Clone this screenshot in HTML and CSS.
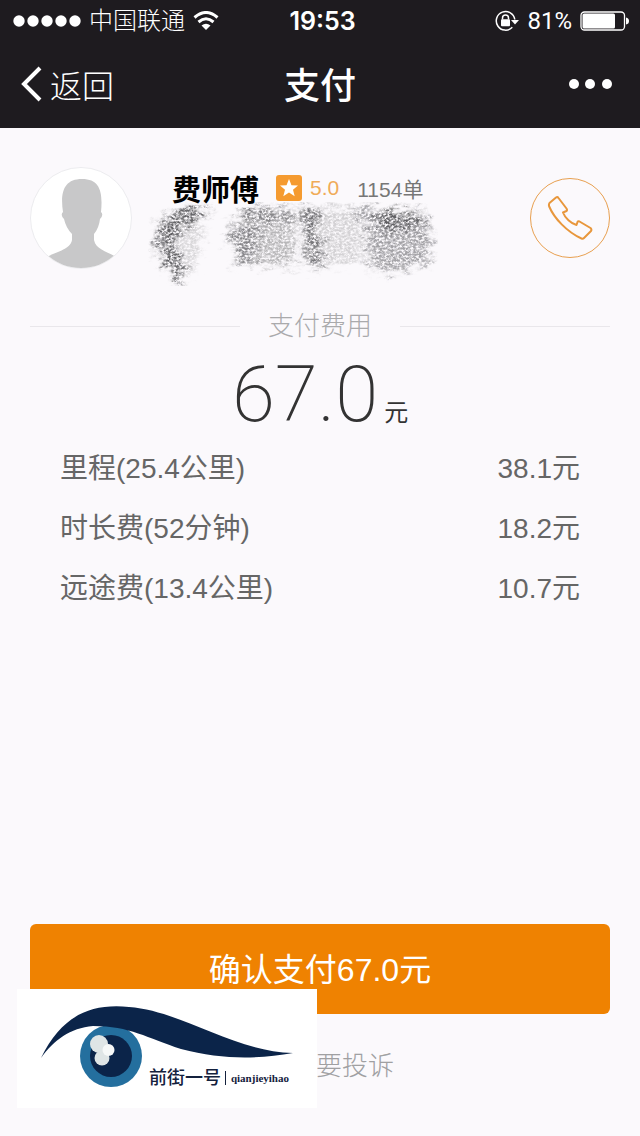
FILE: index.html
```html
<!DOCTYPE html>
<html lang="zh-CN">
<head>
    <meta charset="UTF-8">
    <meta name="viewport" content="width=device-width, initial-scale=1.0">
    <title>支付</title>
    <link rel="stylesheet" href="styles.css">
</head>
<body>

    <header class="top">
        <div class="status">
            <div class="status-left">
                <svg class="signal" width="68" height="12" viewBox="0 0 68 12" fill="#fff">
                    <circle cx="6" cy="6" r="5.7"/>
                    <circle cx="20" cy="6" r="5.7"/>
                    <circle cx="34" cy="6" r="5.7"/>
                    <circle cx="48" cy="6" r="5.7"/>
                    <circle cx="62" cy="6" r="5.7"/>
                </svg>
                <span>中国联通</span>
                <svg width="26" height="20" viewBox="0 0 26 20" fill="none" stroke="#fff" stroke-width="3">
                    <path d="M1.5 6.5Q13-3.5 24.500 6.500"/>
                    <path d="M5.500 11Q13 4.500 20.500 11"/>
                    <path d="M13 19L8.500 14.500Q13 10.800 17.500 14.500Z" fill="#fff" stroke="none"/>
                </svg>
            </div>
            <span class="time">19:53</span>
            <div class="status-right">
                <svg width="24" height="22" viewBox="0 0 24 22" fill="none" stroke="#fff" stroke-width="1.500">
                    <path d="M17.300 17.300A9.300 9.300 0 1 1 19.800 9.500"/>
                    <path d="M16 10H24L20 14.500Z" fill="#fff" stroke="none"/>
                    <path d="M7.500 9.500V8a3 3 0 0 1 6 0v1.500"/>
                    <rect x="6" y="9.300" width="9" height="7" rx="1" fill="#fff" stroke="none"/>
                </svg>
                <span class="percent">81%</span>
                <svg width="50" height="20" viewBox="0 0 50 20">
                    <rect x="1" y="1" width="43.500" height="18" rx="3.500" fill="none" stroke="#fff" stroke-width="1.300"/>
                    <rect x="2.500" y="2.500" width="32.500" height="15" rx="1.500" fill="#fff"/>
                    <path d="M46 6.500Q49 7 49 10T46 13.500Z" fill="#fff"/>
                </svg>
            </div>
        </div>
        <nav class="nav">
            <button type="button" class="back">
                <svg width="22" height="36" viewBox="0 0 22 36" fill="none" stroke="#fff" stroke-width="4">
                    <path d="M20 2L4 18L20 34"/>
                </svg>
                返回
            </button>
            <h1 class="title">支付</h1>
            <button type="button" class="more" aria-label="更多">
                <svg width="44" height="12" viewBox="0 0 44 12" fill="#fff">
                    <circle cx="6" cy="6" r="5"/>
                    <circle cx="22" cy="6" r="5"/>
                    <circle cx="39" cy="6" r="5"/>
                </svg>
            </button>
        </nav>
    </header>

    <main class="content">
        <section class="driver">
            <svg class="avatar" width="102" height="102" viewBox="0 0 102 102">
                <defs>
                    <clipPath id="face"><circle cx="51" cy="51" r="50"/></clipPath>
                </defs>
                <circle cx="51" cy="51" r="50.500" fill="#fff" stroke="#ececef"/>
                <path clip-path="url(#face)" fill="#c8c8c9" d="M33 45C30 25 34 12 52 12C70 12 73 25 71 45Q74 48 70 52Q69 61 64 67V73C66 83 77 84 86 90V102H17V90C27 84 40 83 42 73V67Q36 61 34 52Q30 48 33 45Z"/>
            </svg>

            <div class="info">
                <div class="info-line">
                    <h2 class="name">费师傅</h2>
                    <svg class="star" width="26" height="26" viewBox="0 0 26 26">
                        <rect width="26" height="26" rx="3" fill="#f59b30"/>
                        <path fill="#fff" d="M13 4L15.500 10.200L22 10.500L17 14.700L18.700 21.200L13 17.600L7.300 21.200L9 14.700L4 10.500L10.500 10.200Z"/>
                    </svg>
                    <span class="score">5.0</span>
                    <span class="orders">1154单</span>
                </div>
                <!-- plate number and car, scribbled over -->
                <svg class="scribble" width="290" height="84" viewBox="0 0 290 84">
                    <defs>
                        <filter id="pencil" x="-5%" y="-10%" width="110%" height="120%">
                            <feTurbulence type="fractalNoise" baseFrequency="0.35 0.5" numOctaves="4" seed="8" result="grain"/>
                            <feColorMatrix in="grain" type="matrix" values="0 0 0 0 0  0 0 0 0 0  0 0 0 0 0  3 0 0 0 -0.9" result="dots"/>
                            <feTurbulence type="fractalNoise" baseFrequency="0.08 0.16" numOctaves="3" seed="3" result="warp"/>
                            <feGaussianBlur in="SourceGraphic" stdDeviation="3" result="soft"/>
                            <feDisplacementMap in="soft" in2="warp" scale="24" xChannelSelector="R" yChannelSelector="G" result="rough"/>
                            <feComposite in="rough" in2="dots" operator="in"/>
                        </filter>
                    </defs>
                    <g filter="url(#pencil)" fill="#3c3c3e">
                        <path opacity="0.80" d="M19 16L36 6L60 5L58 16L34 22L28 46L34 66L37 78L28 80L24 66L16 70L16 48L5 54L12 38L8 25Z"/>
                        <path opacity="0.18" d="M32 20L56 22L48 66L32 70Z"/>
                        <path opacity="0.35" d="M88 6L148 8L145 64L85 61L90 44L80 40L84 24L94 22Z"/>
                        <path opacity="0.45" d="M92 6L145 8L136 18L94 18Z"/>
                        <path opacity="0.40" d="M84 26L112 26L106 60L85 60L90 44L80 40Z"/>
                        <path opacity="0.20" d="M150 6L210 6L213 60L158 64Z"/>
                        <path opacity="0.65" d="M152 8L174 8L170 22L166 30L176 42L170 48L178 62L156 64L164 48L154 28Z"/>
                        <path opacity="0.45" d="M202 6L274 9L278 24L286 38L280 48L284 60L232 72L226 62L216 60L222 46L212 42L224 28L214 22Z"/>
                        <path opacity="0.65" d="M226 12L270 10L274 26L230 28Z"/>
                    </g>
                </svg>
            </div>

            <button type="button" class="call" aria-label="打电话">
                <svg width="46" height="46" viewBox="0 0 46 46" fill="none" stroke="#e8973c" stroke-width="2" stroke-linejoin="round">
                    <path d="M9 2.500L2.500 8Q1.500 9.500 2.200 11.500C7 23 20 37 34.500 43.500Q36 44 37 43L44 36Q45 34.500 43.500 33L32.500 26.500Q31 26 30.500 27L29.500 30C24 28.500 18 23 16 17.500L19.500 16Q20.500 15 19.500 13.500L11.500 3Q10.500 1.500 9 2.500Z"/>
                </svg>
            </button>
        </section>

        <h2 class="divider">支付费用</h2>

        <p class="total"><span class="total-num">67.0</span><span class="total-unit">元</span></p>

        <dl class="fees">
            <div class="fee">
                <dt>里程(25.4公里)</dt>
                <dd>38.1元</dd>
            </div>
            <div class="fee">
                <dt>时长费(52分钟)</dt>
                <dd>18.2元</dd>
            </div>
            <div class="fee">
                <dt>远途费(13.4公里)</dt>
                <dd>10.7元</dd>
            </div>
        </dl>
    </main>

    <footer class="bottom">
        <button type="button" class="pay">确认支付67.0元</button>
        <a href="#" class="complain">我要投诉</a>

        <!-- watermark -->
        <div class="mark">
            <svg class="eye" viewBox="0 0 300 119">
                <circle cx="94" cy="67" r="31" fill="#246f9e"/>
                <circle cx="94" cy="67" r="21" fill="#0b2449"/>
                <circle cx="82" cy="55" r="9" fill="#dfe5e6"/>
                <circle cx="85" cy="69" r="7.500" fill="#dfe5e6"/>
                <circle cx="91.500" cy="61" r="6" fill="#f6f8f8"/>
                <path fill="#0b2449" d="M24 69C44 28 72 14 112 18C165 22 215 62 276 64C242 70 205 71 164 60C130 49 113 37 76 37C53 39 37 51 24 69Z"/>
            </svg>
            <p class="mark-text"><span class="mark-cn">前街一号</span><span class="mark-en">qianjieyihao</span></p>
        </div>
    </footer>

</body>
</html>
```
FILE: styles.css
```css
* {
    box-sizing: border-box;
}
body {
    margin: 0;
    min-height: 100vh;
    display: flex;
    flex-direction: column;
    background-color: #fbf9fc;
    color: #666;
    font-family: "Liberation Sans", "Noto Sans CJK SC", sans-serif;
}
h1, h2, p, dl, dd {
    margin: 0;
}
svg {
    display: block;
    flex-shrink: 0;
}
button {
    padding: 0;
    border: none;
    background: none;
    font-family: inherit;
    cursor: pointer;
}

/* status bar + nav */
.top {
    background-color: #1e1b1f;
    color: #fff;
}
.status, .nav {
    display: grid;
    grid-template-columns: 1fr auto 1fr;
    align-items: center;
}
.status {
    height: 40px;
    padding: 0 10px 0 13px;
    font-size: 24px;
    line-height: 42px;
    font-weight: 300;
}
.status-left, .status-right {
    display: flex;
    align-items: center;
    gap: 8px;
}
.status-right {
    justify-content: flex-end;
    gap: 8px;
}
.time {
    padding-left: 2px;
    font-family: Inter, sans-serif;
    font-size: 25px;
    font-weight: 600;
}
.percent {
    font-family: Roboto, sans-serif;
    font-weight: 400;
}
.nav {
    height: 88px;
    padding: 0 28px 0 20px;
}
.back {
    display: flex;
    align-items: center;
    gap: 8px;
    color: #fff;
    font-size: 32px;
    font-weight: 300;
}
.title {
    padding-left: 8px;
    padding-bottom: 2px;
    font-size: 36px;
    font-weight: 500;
}
.more {
    justify-self: end;
}

/* driver */
.content {
    flex: 1;
    padding: 32px 30px 0;
}
.driver {
    display: flex;
    align-items: flex-start;
    height: 149px;
}
.avatar {
    margin-top: 7px;
}
.info {
    flex: 1;
    margin-left: 16px;
}
.info-line {
    display: flex;
    align-items: center;
    height: 56px;
    padding-left: 24px;
    font-size: 21px;
}
.name {
    color: #000;
    font-size: 29px;
    font-weight: 700;
}
.star {
    margin-left: 17px;
}
.score {
    margin-left: 8px;
    color: #f0ab58;
}
.orders {
    margin-left: 18px;
    color: #777;
}
.scribble {
    margin-top: -14px;
}
.call {
    display: flex;
    align-items: center;
    justify-content: center;
    width: 80px;
    height: 80px;
    margin-top: 18px;
    border: 1px solid #e8a050;
    border-radius: 50%;
}

/* price */
.divider {
    display: flex;
    align-items: center;
    gap: 28px;
    color: #aaaaac;
    font-size: 26px;
    line-height: 34px;
    font-weight: 300;
}
.divider::before, .divider::after {
    content: "";
    flex: 1;
    border-top: 1px solid #e9e7eb;
}
.total {
    display: flex;
    align-items: baseline;
    justify-content: center;
    gap: 6px;
    height: 96px;
    color: #333;
}
.total-num {
    font-family: Roboto, sans-serif;
    font-size: 78px;
    line-height: 104px;
    font-weight: 200;
}
.total-unit {
    font-size: 24px;
}
.fees {
    padding: 0 30px;
    font-size: 28px;
    line-height: 60px;
}
.fee {
    display: flex;
    justify-content: space-between;
}

/* buttons */
.bottom {
    position: relative;
    display: flex;
    flex-direction: column;
    padding: 0 30px 50px;
}
.pay {
    height: 90px;
    padding-bottom: 4px;
    border-radius: 6px;
    background-color: #ef8201;
    color: #fff;
    font-size: 32px;
}
.pay:hover {
    background-color: #e07a00;
}
.complain {
    align-self: center;
    margin-top: 32px;
    padding-left: 44px;
    color: #a0a0a2;
    font-size: 26px;
    line-height: 40px;
    font-weight: 300;
    text-decoration: none;
}
.mark {
    position: absolute;
    left: 17px;
    top: 65px;
    width: 300px;
    background-color: #fff;
}
.mark-text {
    position: absolute;
    right: 28px;
    bottom: 20px;
    display: flex;
    align-items: center;
    color: #14213d;
    line-height: 20px;
    font-weight: 700;
}
.mark-cn {
    padding-right: 4px;
    font-size: 18px;
    font-weight: 500;
}
.mark-en {
    padding-left: 5px;
    border-left: 1px solid #14213d;
    font-family: "Liberation Serif", serif;
    font-size: 11px;
    line-height: 14px;
}
```
